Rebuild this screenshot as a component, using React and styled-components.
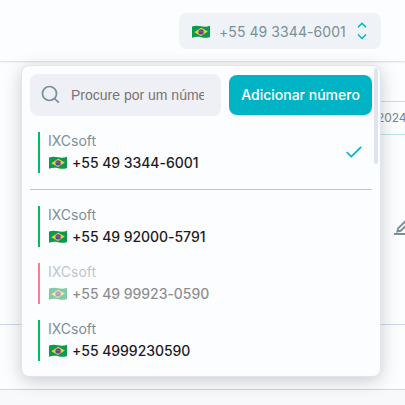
import React from 'react';
import styled, { createGlobalStyle } from 'styled-components';

const numbers = [
    { name: 'IXCsoft', phone: '+55 49 92000-5791', online: true },
    { name: 'IXCsoft', phone: '+55 49 99923-0590', online: false },
    { name: 'IXCsoft', phone: '+55 4999230590', online: true },
];

const BrazilFlag = () => {
    return (
        <FlagIcon viewBox="-.7 -.4 19 13">
            <path d="M.3 1.200C3.500-.1 6.400.1 9.500.9s6 .6 8.800-.6v11.200c-3 1.200-5.700 1-8.800.3s-6-.7-9.200.6z" fill="#0a9a50" />
            <path d="M2.600 6.900 9.500 2.300l6.600 3.800-6.800 4.500z" fill="#f3d03a" />
            <circle cx="9.400" cy="6.500" r="2.700" fill="#5a4a94" />
            <path d="M7 5.800c1.900-.2 3.500.3 5 1.600" stroke="#8a88bd" strokeWidth=".5" fill="none" />
        </FlagIcon>
    )
}

const PhoneItem = ({ name, phone, online, selected }) => {
    return (
        <Item>
            <ItemInfo $online={online}>
                <ItemName>{name}</ItemName>
                <ItemPhone><BrazilFlag />{phone}</ItemPhone>
            </ItemInfo>
            {selected && (
                <CheckIcon viewBox="0 0 16 12">
                    <path d="M.7 6 5.300 10.500 15.200.8" />
                </CheckIcon>
            )}
        </Item>
    )
}

const App = () => {
    return (
        <Page>
            <GlobalStyle />
            <Header>
                <NumberSelect>
                    <BrazilFlag />
                    <SelectText>+55 49 3344-6001</SelectText>
                    <ArrowsIcon viewBox="0 0 10 18">
                        <path d="M1 5.300 5 1.300l4 4M1 12.500l4 4 4-4" />
                    </ArrowsIcon>
                </NumberSelect>
            </Header>
            <Content>
                <DateFilter>2024</DateFilter>
                <EditIcon viewBox="0 0 18 15">
                    <path d="M3.400 11.500 4.200 8.300 11.700.9l2.500 2.500-7.500 7.400z" />
                    <path d="M0 14h18" strokeWidth="2" />
                </EditIcon>
            </Content>
            <TableRow />
            <Footer />

            <Dropdown>
                <Toolbar>
                    <SearchBox>
                        <SearchIcon viewBox="0 0 19 19">
                            <circle cx="8.500" cy="8.500" r="7" />
                            <path d="m13.500 13.500 4.300 4.200" />
                        </SearchIcon>
                        <SearchInput placeholder="Procure por um número" />
                    </SearchBox>
                    <AddButton>Adicionar número</AddButton>
                </Toolbar>
                <PhoneItem name="IXCsoft" phone="+55 49 3344-6001" online selected />
                <Divider />
                {numbers.map((item) => (
                    <PhoneItem key={item.phone} {...item} />
                ))}
                <ScrollThumb />
            </Dropdown>
        </Page>
    )
}

export default App

const GlobalStyle = createGlobalStyle`
    * {
        box-sizing: border-box;
    }
    body {
        margin: 0;
        overflow: hidden;
        font-family: Inter, sans-serif;
        background-color: #f8f9fb;
    }
`

const Page = styled.div`
    position: relative;
    width: 405px;
    height: 405px;
    overflow: hidden;
    display: flex;
    flex-direction: column;
    background-color: #fcfdfe;
`

const Header = styled.div`
    flex: none;
    height: 61px;
    padding: 13px 24px 0 0;
    display: flex;
    align-items: flex-start;
    justify-content: flex-end;
    background-color: #fcfdff;
    box-shadow: 0 1px 2px rgba(0, 0, 0, 0.14);
`

const NumberSelect = styled.div`
    width: 202px;
    height: 36px;
    padding: 0 14px 0 12px;
    display: flex;
    align-items: center;
    border-radius: 8px;
    background-color: #eff2f7;
`

const SelectText = styled.span`
    flex: 1;
    margin-left: 9px;
    color: #7b8f97;
    font-size: 14px;
    letter-spacing: 0.07px;
    white-space: nowrap;
`

const FlagIcon = styled.svg`
    flex: none;
    width: 19px;
    height: 13px;
    overflow: visible;
`

const ArrowsIcon = styled.svg`
    width: 10px;
    height: 18px;
    fill: none;
    stroke: #00b4c5;
    stroke-width: 1.5;
`

const Content = styled.div`
    flex: none;
    height: 263px;
    padding-top: 40px;
    display: flex;
    flex-direction: column;
    align-items: flex-end;
`

const DateFilter = styled.div`
    width: 105px;
    height: 34px;
    padding-left: 77px;
    line-height: 32px;
    border-top: 1px solid #b8e3e9;
    border-bottom: 1px solid #b8e3e9;
    color: #78868d;
    font-size: 12px;
    letter-spacing: -0.1px;
    white-space: nowrap;
`

const EditIcon = styled.svg`
    flex: none;
    width: 18px;
    height: 15px;
    margin: 85px -7px 0 0;
    fill: none;
    stroke: #78909c;
    stroke-width: 1.9;
`

const TableRow = styled.div`
    flex: none;
    height: 65px;
    border-top: 1px solid #cbd6e6;
`

const Footer = styled.div`
    flex: 1;
    border-top: 1px solid #cbd6e6;
    background-color: #f8f9fb;
`

const Dropdown = styled.div`
    position: absolute;
    top: 65px;
    left: 21px;
    width: 360px;
    height: 312px;
    padding: 8px;
    border: 1px solid #dfe5ee;
    border-radius: 8px;
    background-color: #fcfdff;
    box-shadow: 0 4px 18px rgba(0, 0, 0, 0.2);
`

const Toolbar = styled.div`
    height: 42px;
    margin-bottom: 16px;
    display: flex;
    align-items: center;
    gap: 8px;
`

const SearchBox = styled.div`
    width: 191px;
    height: 42px;
    padding: 0 17px 1px 11px;
    display: flex;
    align-items: center;
    border-radius: 8px;
    background-color: #eff0f5;
`

const SearchIcon = styled.svg`
    flex: none;
    width: 19px;
    height: 19px;
    margin-top: -1px;
    fill: none;
    stroke: #78909c;
    stroke-width: 1.7;
`

const SearchInput = styled.input`
    flex: 1;
    min-width: 0;
    margin-left: 11px;
    padding: 0;
    border: none;
    outline: none;
    background: transparent;
    font-family: "Liberation Sans", Arial, sans-serif;
    font-size: 14px;

    &::placeholder {
        color: #757575;
    }
`

const AddButton = styled.button`
    width: 143px;
    height: 40px;
    padding: 0 0 2px;
    border: none;
    border-radius: 8px;
    background-color: #00b4c5;
    color: white;
    font-family: Inter, sans-serif;
    font-size: 14px;
    font-weight: 500;
    white-space: nowrap;
`

const Item = styled.div`
    height: 57px;
    padding: 0 10px 16px 8px;
    display: flex;
    align-items: center;
    justify-content: space-between;
`

const ItemInfo = styled.div`
    height: 41px;
    padding-left: 8px;
    border-left: 2px solid ${({ $online }) => ($online ? '#00bd62' : '#f7002b')};
    opacity: ${({ $online }) => ($online ? 1 : 0.5)};
`

const ItemName = styled.div`
    line-height: 18px;
    color: #7b8f97;
    font-size: 14px;
`

const ItemPhone = styled.div`
    display: flex;
    align-items: center;
    gap: 5px;
    height: 25px;
    color: #1c1c1c;
    font-size: 14px;
    font-weight: 500;
    letter-spacing: -0.05px;
    white-space: nowrap;
`

const CheckIcon = styled.svg`
    width: 16px;
    height: 12px;
    margin-top: -2px;
    fill: none;
    stroke: #00b4c5;
    stroke-width: 1.7;
`

const Divider = styled.div`
    height: 1px;
    margin: 0 0 16px;
    background-color: #bdc7d2;
`

const ScrollThumb = styled.div`
    position: absolute;
    top: 2px;
    right: 2px;
    width: 4px;
    height: 96px;
    border-radius: 2px;
    background-color: #dfe4ed;
`
